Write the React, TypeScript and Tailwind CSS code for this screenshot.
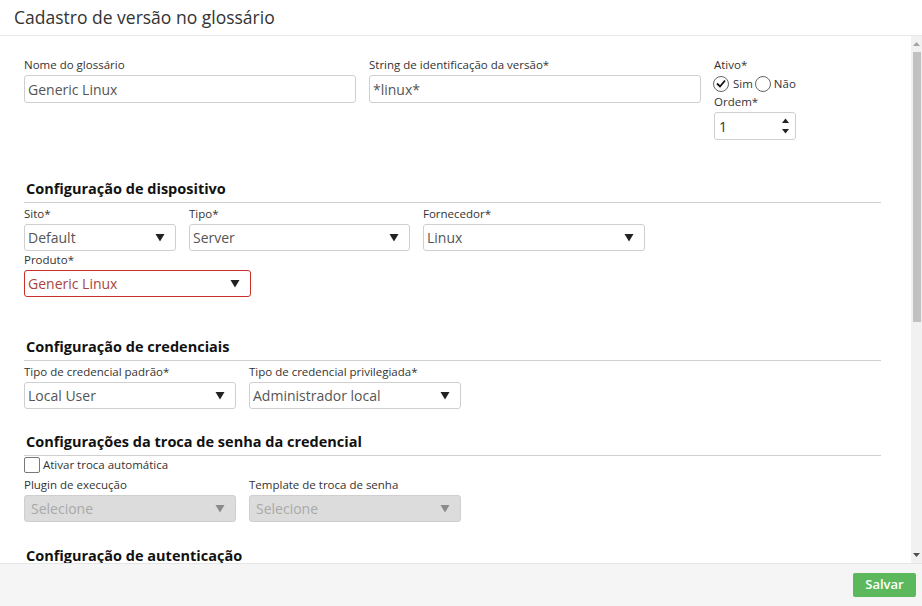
import React from "react";

const font = { fontFamily: '"Open Sans", "Noto Sans", sans-serif' };

function Caret({ disabled }: { disabled?: boolean }) {
  return (
    <svg width="10" height="9" viewBox="0 0 10 9" className="shrink-0">
      <path d="M0.5 1 L9.5 1 L5 8.5 Z" fill={disabled ? "#8a8a8a" : "#222"} />
    </svg>
  );
}

function Label({ children }: { children: React.ReactNode }) {
  return <div className="text-[11.5px] leading-[14px] text-[#333] mb-[3px] whitespace-nowrap">{children}</div>;
}

function Select({ value, w, error, disabled }: { value: string; w: string; error?: boolean; disabled?: boolean }) {
  const border = error ? "border-[#c9302c]" : "border-[#cfcfcf]";
  const bg = disabled ? "bg-[#dcdcdc]" : "bg-white";
  const color = error ? "text-[#a94442]" : disabled ? "text-[#a9a9a9]" : "text-[#555]";
  return (
    <div className={`${w} h-[27px] border ${border} ${bg} rounded-[3px] flex items-center justify-between pl-[3px] pr-[10px]`}>
      <span className={`text-[14px] ${color} ${disabled ? "pl-[3px]" : ""}`}>{value}</span>
      <Caret disabled={disabled} />
    </div>
  );
}

function Section({ title, children }: { title: string; children: React.ReactNode }) {
  return (
    <div>
      <div className="pl-[2px] text-[14.5px] font-bold text-[#111] leading-[18px]">{title}</div>
      <div className="h-px bg-[#cfcfcf] mt-[4px] mb-[4px] w-[857px]" />
      {children}
    </div>
  );
}

export default function App() {
  return (
    <div className="w-[922px] h-[606px] bg-white flex flex-col overflow-hidden" style={font}>
      <div className="h-[36px] border-b border-[#e8e8e8] flex items-center pl-[14px] shrink-0">
        <span className="text-[17.5px] text-[#333]">Cadastro de versão no glossário</span>
      </div>
      <div className="flex-1 flex min-h-0">
        <div className="flex-1 overflow-hidden pl-[24px] pt-[22px]">
          {/* Row 1 */}
          <div className="flex gap-[13px]">
            <div>
              <Label>Nome do glossário</Label>
              <div className="w-[332px] h-[28px] border border-[#cfcfcf] rounded-[3px] flex items-center px-[3px] text-[14px] text-[#555]">Generic Linux</div>
            </div>
            <div>
              <Label>String de identificação da versão*</Label>
              <div className="w-[332px] h-[28px] border border-[#cfcfcf] rounded-[3px] flex items-center px-[3px] text-[14px] text-[#555]">*linux*</div>
            </div>
            <div>
              <Label>Ativo*</Label>
              <div className="flex items-center text-[11.5px] text-[#333] mt-[1px] -ml-[1px]">
                <span className="w-[16px] h-[16px] rounded-full border border-[#666] flex items-center justify-center mr-[4px]">
                  <svg width="10" height="9" viewBox="0 0 10 9"><path d="M1 4.5 L4 7.5 L9 1.5" stroke="#111" strokeWidth="1.8" fill="none" /></svg>
                </span>
                <span className="mr-[2px]">Sim</span>
                <span className="w-[16px] h-[16px] rounded-full border border-[#666] mr-[3px]" />
                <span>Não</span>
              </div>
              <div className="mt-[3px]"><Label>Ordem*</Label></div>
              <div className="w-[82px] h-[28px] border border-[#cfcfcf] rounded-[3px] flex items-center justify-between pl-[4px] pr-[6px] text-[14px] text-[#333]">
                <span>1</span>
                <svg width="7" height="18" viewBox="0 0 7 18">
                  <path d="M0 6 L7 6 L3.5 1.5 Z" fill="#222" />
                  <path d="M0 12 L7 12 L3.5 16.5 Z" fill="#222" />
                </svg>
              </div>
            </div>
          </div>

          <div className="mt-[40px]">
            <Section title="Configuração de dispositivo">
              <div className="flex gap-[13px]">
                <div><Label>Sito*</Label><Select value="Default" w="w-[152px]" /></div>
                <div><Label>Tipo*</Label><Select value="Server" w="w-[221px]" /></div>
                <div><Label>Fornecedor*</Label><Select value="Linux" w="w-[222px]" /></div>
              </div>
              <div className="mt-[2px]"><Label>Produto*</Label><Select value="Generic Linux" w="w-[227px]" error /></div>
            </Section>
          </div>

          <div className="mt-[41px]">
            <Section title="Configuração de credenciais">
              <div className="flex gap-[13px]">
                <div><Label>Tipo de credencial padrão*</Label><Select value="Local User" w="w-[212px]" /></div>
                <div><Label>Tipo de credencial privilegiada*</Label><Select value="Administrador local" w="w-[212px]" /></div>
              </div>
            </Section>
          </div>

          <div className="mt-[24px]">
            <Section title="Configurações da troca de senha da credencial">
              <div className="flex items-center mt-[-4px]">
                <span className="w-[16px] h-[16px] border border-[#777] rounded-[2px] mr-[3px]" />
                <span className="text-[11.5px] text-[#333]">Ativar troca automática</span>
              </div>
              <div className="flex gap-[13px] mt-[4px]">
                <div><Label>Plugin de execução</Label><Select value="Selecione" w="w-[212px]" disabled /></div>
                <div><Label>Template de troca de senha</Label><Select value="Selecione" w="w-[212px]" disabled /></div>
              </div>
            </Section>
          </div>

          <div className="mt-[25px]">
            <Section title="Configuração de autenticação">
              <div className="h-[40px]" />
            </Section>
          </div>
        </div>
        {/* scrollbar */}
        <div className="w-[11px] bg-[#f1f1f1] flex flex-col items-center shrink-0">
          <div className="h-[16px] flex items-center justify-center">
            <svg width="7" height="4" viewBox="0 0 7 4"><path d="M0 4 L7 4 L3.5 0 Z" fill="#a3a3a3" /></svg>
          </div>
          <div className="w-[8px] h-[270px] bg-[#c1c1c1]" />
          <div className="flex-1" />
          <div className="h-[16px] flex items-center justify-center">
            <svg width="7" height="4" viewBox="0 0 7 4"><path d="M0 0 L7 0 L3.5 4 Z" fill="#505050" /></svg>
          </div>
        </div>
      </div>
      <div className="h-[43px] shrink-0 bg-[#f5f5f5] border-t border-[#e5e5e5] flex items-center justify-end pr-[6px]">
        <div className="w-[63px] h-[24px] bg-[#5cb85c] rounded-[2px] flex items-center justify-center text-white text-[13px] font-semibold">Salvar</div>
      </div>
    </div>
  );
}
